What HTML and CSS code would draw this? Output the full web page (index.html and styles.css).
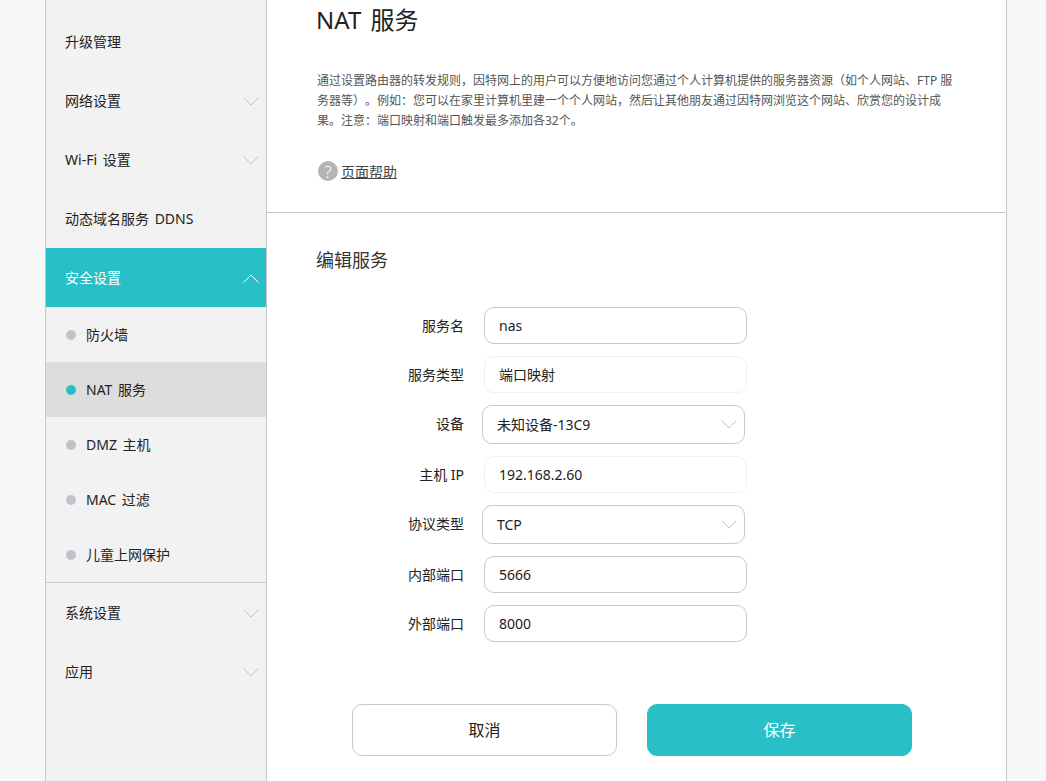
FILE: index.html
```html
<!DOCTYPE html>
<html lang="zh-CN">
<head>
<meta charset="utf-8">
<title>NAT 服务</title>
<link rel="stylesheet" href="styles.css">
</head>
<body>
<div class="shell">
  <nav class="sidebar">
    <div class="nav-item">升级管理</div>
    <div class="nav-item">网络设置<svg class="chev" viewBox="0 0 16 9"><path d="M.5.5 8 8 15.500.5"/></svg></div>
    <div class="nav-item">Wi-Fi 设置<svg class="chev" viewBox="0 0 16 9"><path d="M.5.5 8 8 15.500.5"/></svg></div>
    <div class="nav-item">动态域名服务 DDNS</div>
    <div class="nav-item active">安全设置<svg class="chev" viewBox="0 0 16 9"><path d="M.5 8.500 8 1l7.500 7.500"/></svg></div>
    <div class="sub-list">
      <div class="sub-item"><span class="dot"></span>防火墙</div>
      <div class="sub-item current"><span class="dot"></span>NAT 服务</div>
      <div class="sub-item"><span class="dot"></span>DMZ 主机</div>
      <div class="sub-item"><span class="dot"></span>MAC 过滤</div>
      <div class="sub-item"><span class="dot"></span>儿童上网保护</div>
    </div>
    <div class="nav-item">系统设置<svg class="chev" viewBox="0 0 16 9"><path d="M.5.5 8 8 15.500.5"/></svg></div>
    <div class="nav-item">应用<svg class="chev" viewBox="0 0 16 9"><path d="M.5.5 8 8 15.500.5"/></svg></div>
  </nav>
  <main class="main">
    <header class="intro">
      <h1>NAT 服务</h1>
      <p class="desc">通过设置路由器的转发规则，因特网上的用户可以方便地访问您通过个人计算机提供的服务器资源（如个人网站、FTP 服务器等）。例如：您可以在家里计算机里建一个个人网站，然后让其他朋友通过因特网浏览这个网站、欣赏您的设计成果。注意：端口映射和端口触发最多添加各32个。</p>
      <div class="help"><span class="help-icon">?</span><span class="help-link">页面帮助</span></div>
    </header>
    <section class="edit">
      <h2>编辑服务</h2>
      <div class="form">
        <div class="row"><span class="label">服务名</span><div class="field">nas</div></div>
        <div class="row"><span class="label">服务类型</span><div class="field disabled">端口映射</div></div>
        <div class="row select-row"><span class="label">设备</span><div class="select">未知设备-13C9<svg class="chev" viewBox="0 0 16 9"><path d="M.5.5 8 8 15.500.5"/></svg></div></div>
        <div class="row"><span class="label">主机 IP</span><div class="field disabled">192.168.2.60</div></div>
        <div class="row select-row"><span class="label">协议类型</span><div class="select">TCP<svg class="chev" viewBox="0 0 16 9"><path d="M.5.5 8 8 15.500.5"/></svg></div></div>
        <div class="row"><span class="label">内部端口</span><div class="field">5666</div></div>
        <div class="row"><span class="label">外部端口</span><div class="field">8000</div></div>
      </div>
      <div class="actions">
        <div class="btn">取消</div>
        <div class="btn primary">保存</div>
      </div>
    </section>
  </main>
</div>
</body>
</html>
```
FILE: styles.css
```css
* { box-sizing: border-box; }
html, body { margin: 0; height: 781px; overflow: hidden; }
body {
  background: #f7f7f7;
  font-family: "Noto Sans", "Noto Sans CJK SC", sans-serif;
  font-size: 14px;
  color: #222;
  text-spacing-trim: space-all;
}
.shell {
  display: flex;
  width: 962px;
  height: 781px;
  margin-left: 45px;
  padding-right: 1px;
  background: #fff;
  border-left: 1px solid #c8c8c8;
  border-right: 1px solid #c8c8c8;
}
.sidebar {
  flex: 0 0 221px;
  padding-top: 12px;
  background: #f2f2f2;
  border-right: 1px solid #c8c8c8;
}
.nav-item {
  display: flex;
  align-items: center;
  justify-content: space-between;
  height: 59px;
  padding: 0 7px 2px 19px;
  color: #222;
  word-spacing: 2px;
}
.nav-item.active { background: #29bfc7; color: #fff; }
.chev { width: 16px; height: 9px; fill: none; stroke: #c4c4c4; stroke-width: 1; }
.nav-item .chev { margin-top: 4px; }
.active .chev { stroke: #fff; }
.sub-list { border-bottom: 1px solid #c8c8c8; }
.sub-item {
  display: flex;
  align-items: center;
  gap: 10px;
  height: 55px;
  padding: 0 0 2px 20px;
  word-spacing: 2px;
}
.sub-item.current { background: #dddddd; }
.dot { width: 10px; height: 10px; margin-top: 2px; border-radius: 50%; background: #c1c3cc; }
.current .dot { background: #29bfc7; }
.main { flex: 1; min-width: 0; background: #fff; }
.intro {
  height: 213px;
  padding: 0 50px;
  border-bottom: 1px solid #c8c8c8;
}
h1 {
  margin: 0 0 0 -1px;
  font-size: 24px;
  font-weight: 400;
  line-height: 40px;
  color: #222;
  word-spacing: 3px;
}
.desc {
  width: 638px;
  margin: 31px 0 0;
  font-size: 12px;
  line-height: 20px;
  color: #555;
}
.help {
  display: flex;
  align-items: center;
  gap: 3px;
  height: 22px;
  margin-top: 29px;
  margin-left: 1px;
  color: #444;
}
.help-icon {
  display: flex;
  align-items: center;
  justify-content: center;
  width: 20px;
  height: 20px;
  border-radius: 50%;
  background: #b4b4b4;
  color: #fff;
  font-size: 17px;
  font-weight: 300;
}
.help-link { text-decoration: underline; }
.edit { padding: 0 50px; }
h2 {
  margin: 0 0 0 -1px;
  padding-top: 33px;
  font-size: 18px;
  font-weight: 400;
  line-height: 28px;
  color: #333;
}
.form { display: flex; flex-direction: column; gap: 12px; margin-top: 33px; }
.row { display: flex; align-items: center; }
.label { width: 147px; padding-bottom: 1px; text-align: right; color: #222; }
.select-row .label { padding-bottom: 3px; }
.field, .select {
  display: flex;
  align-items: center;
  justify-content: space-between;
  width: 263px;
  background: #fff;
  border: 1px solid #c8c8c8;
}
.field {
  height: 37px;
  margin-left: 20px;
  padding: 0 0 1px 14px;
  border-radius: 10px;
}
.field.disabled { border-color: #f0f0f0; }
.select {
  height: 39px;
  margin-left: 18px;
  padding: 0 7px 1px 14px;
  border-radius: 10px;
}
.select .chev { margin-top: 1px; }
.actions { display: flex; gap: 30px; margin-top: 62px; margin-left: 35px; }
.btn {
  display: flex;
  align-items: center;
  justify-content: center;
  width: 265px;
  height: 52px;
  padding-bottom: 2px;
  border: 1px solid #c8c8c8;
  border-radius: 10px;
  background: #fff;
  font-size: 16px;
}
.btn.primary { background: #29bfc7; border-color: #29bfc7; color: #fff; }
```
